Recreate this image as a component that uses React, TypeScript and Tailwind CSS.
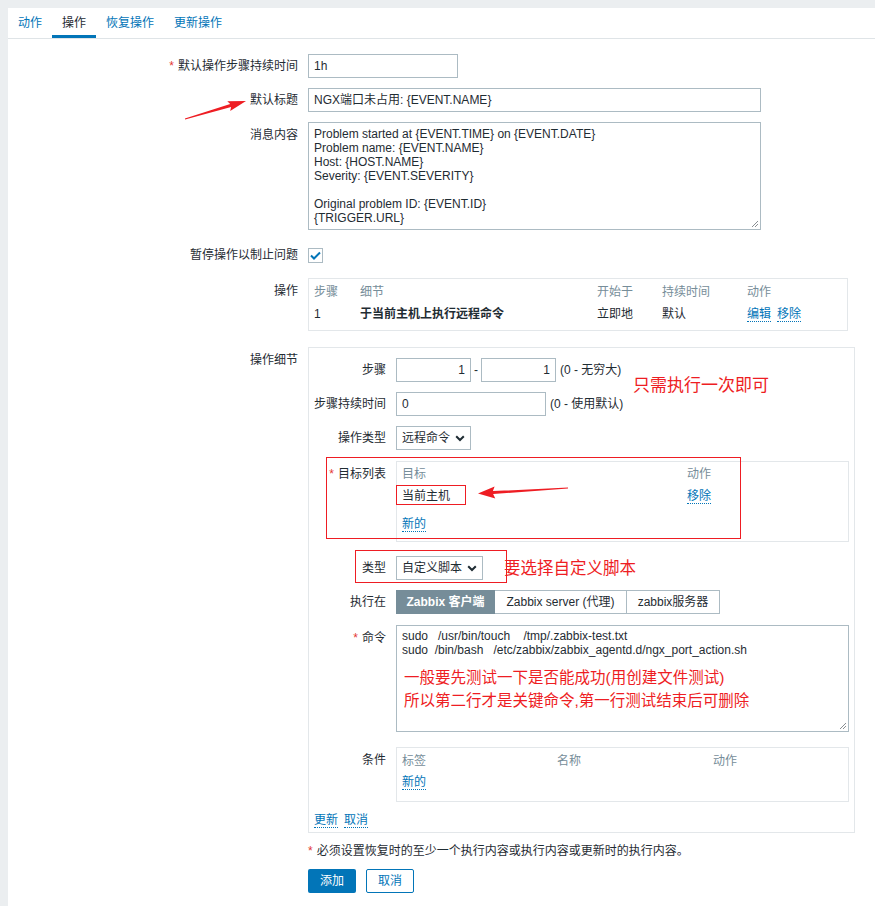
import React from "react";

const FONT = '"Liberation Sans", Arial, "Noto Sans CJK SC", sans-serif';
const RED = "#ee1d23";

type Pt = [number, number];
function arrowPoints(T: Pt, P: Pt, L: number, W: number, w0: number, w1: number) {
  const dx = P[0] - T[0];
  const dy = P[1] - T[1];
  const len = Math.hypot(dx, dy);
  const d: Pt = [dx / len, dy / len];
  const n: Pt = [-d[1], d[0]];
  const B: Pt = [P[0] - d[0] * L, P[1] - d[1] * L];
  const pts: Pt[] = [
    [T[0] + (n[0] * w0) / 2, T[1] + (n[1] * w0) / 2],
    [B[0] + (n[0] * w1) / 2, B[1] + (n[1] * w1) / 2],
    [B[0] + n[0] * W - d[0] * 2, B[1] + n[1] * W - d[1] * 2],
    P,
    [B[0] - n[0] * W - d[0] * 2, B[1] - n[1] * W - d[1] * 2],
    [B[0] - (n[0] * w1) / 2, B[1] - (n[1] * w1) / 2],
    [T[0] - (n[0] * w0) / 2, T[1] - (n[1] * w0) / 2],
  ];
  return pts.map((p) => `${p[0].toFixed(1)},${p[1].toFixed(1)}`).join(" ");
}

function Star() {
  return <span className="text-[#e33734] mr-[4px]">*</span>;
}

function Lnk({ children }: { children: React.ReactNode }) {
  return (
    <span className="text-[#0275b8] border-b border-dotted border-[#0275b8] leading-[14px]">{children}</span>
  );
}

function Chevron() {
  return (
    <svg width="10" height="7" viewBox="0 0 10 7" className="shrink-0">
      <path d="M1.2 1.2 L5 5 L8.8 1.2" fill="none" stroke="#1f2c33" strokeWidth="2" />
    </svg>
  );
}

function Row({
  label,
  star,
  top,
  children,
  className = "",
}: {
  label: string;
  star?: boolean;
  top?: boolean;
  children: React.ReactNode;
  className?: string;
}) {
  return (
    <div className={`flex ${className}`}>
      <div
        className={`w-[290px] shrink-0 text-right ${top ? "pt-[4px]" : "flex items-center justify-end"} h-auto`}
      >
        {star && <Star />}
        {label}
      </div>
      <div className="ml-[10px] flex items-center">{children}</div>
    </div>
  );
}

function SubRow({
  label,
  star,
  top,
  children,
  className = "",
}: {
  label: string;
  star?: boolean;
  top?: boolean;
  children: React.ReactNode;
  className?: string;
}) {
  return (
    <div className={`flex ${className}`}>
      <div className={`w-[77px] shrink-0 text-right whitespace-nowrap ${top ? "pt-[4px]" : "flex items-center justify-end"}`}>
        {star && <Star />}
        {label}
      </div>
      <div className="ml-[10px] flex items-center">{children}</div>
    </div>
  );
}

export default function App() {
  const inputCls = "h-[24px] border border-[#acbbc3] bg-white px-[5px] flex items-center";
  return (
    <div
      className="relative w-[875px] h-[906px] bg-[#ebeef0] overflow-hidden pt-[8px] pl-[8px] text-[12px] text-[#1f2c33]"
      style={{ fontFamily: FONT }}
    >
      <div className="bg-white h-full">
        {/* tabs */}
        <div className="flex h-[31px] border-b border-[#dfe4e7]">
          <div className="px-[10px] flex items-center text-[#0275b8]">动作</div>
          <div className="px-[10px] flex items-center text-[#1f2c33] border-b-[3px] border-[#0275b8] pt-[3px]">操作</div>
          <div className="px-[10px] flex items-center text-[#0275b8]">恢复操作</div>
          <div className="px-[10px] flex items-center text-[#0275b8]">更新操作</div>
        </div>

        <div className="pt-[15px]">
          <Row label="默认操作步骤持续时间" star>
            <div className={`${inputCls} w-[150px]`}>1h</div>
          </Row>
          <Row label="默认标题" className="mt-[10px]">
            <div className={`${inputCls} w-[453px]`}>NGX端口未占用: {"{EVENT.NAME}"}</div>
          </Row>
          <Row label="消息内容" top className="mt-[10px]">
            <div className="relative w-[453px] h-[108px] border border-[#acbbc3] px-[5px] pt-[4px] leading-[14px] whitespace-pre">
              {"Problem started at {EVENT.TIME} on {EVENT.DATE}\nProblem name: {EVENT.NAME}\nHost: {HOST.NAME}\nSeverity: {EVENT.SEVERITY}\n\nOriginal problem ID: {EVENT.ID}\n{TRIGGER.URL}"}
              <svg className="absolute right-[1px] bottom-[1px]" width="9" height="9" viewBox="0 0 9 9">
                <path d="M8 2 L2 8 M8 5 L5 8" stroke="#8a8f93" strokeWidth="1" />
              </svg>
            </div>
          </Row>
          <Row label="暂停操作以制止问题" className="mt-[13px] h-[24px]">
            <div className="w-[15px] h-[15px] border border-[#acbbc3] flex items-center justify-center">
              <svg width="11" height="9" viewBox="0 0 11 9">
                <path d="M1 4.5 L4 7.5 L10 1.5" fill="none" stroke="#0275b8" strokeWidth="2" />
              </svg>
            </div>
          </Row>
          <Row label="操作" top className="mt-[11px]">
            <div className="w-[540px] border border-[#e3e7ea] px-[5px] pt-[5px] pb-[8px]">
              <div className="flex h-[16px] items-center text-[#768d99]">
                <div className="w-[46px]">步骤</div>
                <div className="w-[237px]">细节</div>
                <div className="w-[65px]">开始于</div>
                <div className="w-[85px]">持续时间</div>
                <div>动作</div>
              </div>
              <div className="flex h-[16px] items-center mt-[6px]">
                <div className="w-[46px]">1</div>
                <div className="w-[237px] font-bold">于当前主机上执行远程命令</div>
                <div className="w-[65px]">立即地</div>
                <div className="w-[85px]">默认</div>
                <div className="flex gap-[6px]">
                  <Lnk>编辑</Lnk>
                  <Lnk>移除</Lnk>
                </div>
              </div>
            </div>
          </Row>

          <Row label="操作细节" top className="mt-[16px]">
            <div className="w-[547px] border border-[#e3e7ea] pt-[10px] pb-[4px]">
              <SubRow label="步骤" className="h-[24px]">
                <div className={`${inputCls} w-[75px] justify-end`}>1</div>
                <span className="mx-[3px]">-</span>
                <div className={`${inputCls} w-[75px] justify-end`}>1</div>
                <span className="ml-[4px] text-[#1f2c33]">(0 - 无穷大)</span>
              </SubRow>
              <SubRow label="步骤持续时间" className="h-[24px] mt-[10px]">
                <div className={`${inputCls} w-[150px]`}>0</div>
                <span className="ml-[4px]">(0 - 使用默认)</span>
              </SubRow>
              <SubRow label="操作类型" className="h-[24px] mt-[10px]">
                <div className={`${inputCls} w-[75px] justify-between`}>
                  <span>远程命令</span>
                  <Chevron />
                </div>
              </SubRow>
              <SubRow label="目标列表" star top className="mt-[11px]">
                <div className="w-[453px] h-[81px] border border-[#e3e7ea] px-[5px] pt-[4px]">
                  <div className="flex h-[16px] items-center text-[#768d99]">
                    <div className="w-[285px]">目标</div>
                    <div>动作</div>
                  </div>
                  <div className="flex h-[16px] items-center mt-[6px]">
                    <div className="w-[285px]">当前主机</div>
                    <Lnk>移除</Lnk>
                  </div>
                  <div className="flex h-[16px] items-center mt-[12px]">
                    <Lnk>新的</Lnk>
                  </div>
                </div>
              </SubRow>
              <SubRow label="类型" className="h-[24px] mt-[14px]">
                <div className={`${inputCls} w-[87px] justify-between`}>
                  <span>自定义脚本</span>
                  <Chevron />
                </div>
                <span className="ml-[21px] text-[16.5px] leading-[20px]" style={{ color: RED }}>
                  要选择自定义脚本
                </span>
              </SubRow>
              <SubRow label="执行在" className="h-[24px] mt-[10px]">
                <div className="flex h-[24px]">
                  <div className="w-[99px] flex items-center justify-center bg-[#768d99] border border-[#768d99] text-white font-bold">
                    Zabbix 客户端
                  </div>
                  <div className="w-[131px] flex items-center justify-center border-y border-[#acbbc3]">
                    Zabbix server (代理)
                  </div>
                  <div className="w-[94px] flex items-center justify-center border border-[#acbbc3]">
                    zabbix服务器
                  </div>
                </div>
              </SubRow>
              <SubRow label="命令" star top className="mt-[11px]">
                <div className="relative w-[453px] h-[107px] border border-[#acbbc3] px-[5px] pt-[3px]">
                  <div className="leading-[14px] whitespace-pre">
                    {"sudo   /usr/bin/touch    /tmp/.zabbix-test.txt\nsudo  /bin/bash   /etc/zabbix/zabbix_agentd.d/ngx_port_action.sh"}
                  </div>
                  <div className="mt-[9px] pl-[2px] text-[15.5px] leading-[23px] whitespace-nowrap" style={{ color: RED }}>
                    <div>一般要先测试一下是否能成功(用创建文件测试)</div>
                    <div>所以第二行才是关键命令,第一行测试结束后可删除</div>
                  </div>
                  <svg className="absolute right-[1px] bottom-[1px]" width="9" height="9" viewBox="0 0 9 9">
                    <path d="M8 2 L2 8 M8 5 L5 8" stroke="#8a8f93" strokeWidth="1" />
                  </svg>
                </div>
              </SubRow>
              <SubRow label="条件" top className="mt-[15px]">
                <div className="w-[453px] h-[55px] border border-[#e3e7ea] px-[5px] pt-[5px]">
                  <div className="flex h-[16px] items-center text-[#768d99]">
                    <div className="w-[155px]">标签</div>
                    <div className="w-[156px]">名称</div>
                    <div>动作</div>
                  </div>
                  <div className="flex h-[16px] items-center mt-[5px]">
                    <Lnk>新的</Lnk>
                  </div>
                </div>
              </SubRow>
              <div className="flex gap-[6px] pl-[5px] mt-[10px] h-[16px] items-center">
                <Lnk>更新</Lnk>
                <Lnk>取消</Lnk>
              </div>
            </div>
          </Row>

          <div className="ml-[300px] mt-[10px] h-[16px] flex items-center">
            <Star />
            必须设置恢复时的至少一个执行内容或执行内容或更新时的执行内容。
          </div>
          <div className="ml-[300px] mt-[10px] flex gap-[10px]">
            <div className="w-[48px] h-[24px] rounded-[2px] bg-[#0275b8] text-white flex items-center justify-center">
              添加
            </div>
            <div className="w-[48px] h-[24px] rounded-[2px] border border-[#0275b8] text-[#0275b8] flex items-center justify-center">
              取消
            </div>
          </div>
        </div>
      </div>

      {/* annotations overlay */}
      <div className="absolute left-[633px] top-[376px] text-[17px] leading-[20px] whitespace-nowrap" style={{ color: RED }}>
        只需执行一次即可
      </div>
      <div className="absolute left-[326px] top-[457px] w-[415px] h-[82px] border-[1.5px]" style={{ borderColor: RED }} />
      <div className="absolute left-[396px] top-[485px] w-[70px] h-[20px] border-[1.5px]" style={{ borderColor: RED }} />
      <div className="absolute left-[355px] top-[550px] w-[152px] h-[33px] border-[1.5px]" style={{ borderColor: RED }} />
      <svg className="absolute left-0 top-0 pointer-events-none" width="875" height="906">
        <polygon points={arrowPoints([185, 119], [246, 101], 16, 5, 1, 3)} fill={RED} />
        <polygon points={arrowPoints([568, 488], [478, 493.5], 15, 6, 1, 3)} fill={RED} />
      </svg>
    </div>
  );
}
